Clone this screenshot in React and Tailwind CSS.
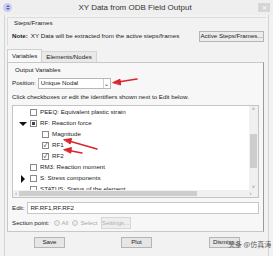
import React from 'react';

const font = { fontFamily: '"Liberation Sans", "Noto Sans CJK SC", sans-serif' };

/* ─── 작은 체크박스 ─── */
const Check = ({ state }) => (
  <span className="w-[7px] h-[7px] border border-[#8a8a8a] bg-white flex items-center justify-center shrink-0">
    {state === 'on' && <span className="text-[6px] leading-none text-[#222] -mt-px">✓</span>}
    {state === 'part' && <span className="w-[3px] h-[3px] bg-[#444]" />}
  </span>
);

/* ─── 트리 삼각형 (없으면 빈칸) ─── */
const Tri = ({ kind }) => (
  <span className="w-[8px] flex items-center justify-center shrink-0">
    {kind === 'open' && (
      <span className="w-0 h-0 border-l-[4px] border-r-[4px] border-t-[4px] border-l-transparent border-r-transparent border-t-[#111]" />
    )}
    {kind === 'closed' && (
      <span className="w-0 h-0 border-t-[4px] border-b-[4px] border-l-[4px] border-t-transparent border-b-transparent border-l-[#111]" />
    )}
  </span>
);

const ROWS = [
  { indent: 0, tri: null, check: 'off', label: 'PEEQ: Equivalent plastic strain' },
  { indent: 0, tri: 'open', check: 'part', label: 'RF: Reaction force' },
  { indent: 1, tri: null, check: 'off', label: 'Magnitude' },
  { indent: 1, tri: null, check: 'on', label: 'RF1' },
  { indent: 1, tri: null, check: 'on', label: 'RF2' },
  { indent: 0, tri: null, check: 'off', label: 'RM3: Reaction moment' },
  { indent: 0, tri: 'closed', check: 'off', label: 'S: Stress components' },
  { indent: 0, tri: null, check: 'off', label: 'STATUS: Status of the element' },
];

const Btn = ({ children, className = '' }) => (
  <div className={`h-[11px] border border-[#b5b5b5] bg-[#e6e6e6] flex items-center justify-center whitespace-nowrap text-[6.2px] text-[#222] ${className}`}>
    {children}
  </div>
);

export default function App() {
  return (
    <div style={font} className="relative w-[273px] h-[256px] overflow-hidden bg-[#f2f2f2] text-[#222] text-[6.2px] leading-none">
      {/* 타이틀 바 */}
      <div className="h-[15px] flex items-center px-[3px] bg-[#efefef]">
        <span className="w-[9px] h-[9px] rounded-full bg-[#c9cdf0] flex flex-col items-center justify-center">
          <span className="w-0 h-0 border-l-[2px] border-r-[2px] border-b-[2px] border-l-transparent border-r-transparent border-b-[#5560b8]" />
          <span className="w-0 h-0 mt-px border-l-[2px] border-r-[2px] border-t-[2px] border-l-transparent border-r-transparent border-t-[#5560b8]" />
        </span>
        <div className="flex-1 text-center text-[8px] text-[#333]">XY Data from ODB Field Output</div>
        <span className="w-[12px] h-[9px] bg-[#d6d6d6] text-white text-[6px] flex items-center justify-center">✕</span>
      </div>

      {/* 본문 */}
      <div className="h-[241px] mx-[4px] border-x border-[#d4d4d4] flex flex-col px-[2px]">
        {/* Steps/Frames 그룹 */}
        <div className="mt-[2px] h-[29px] border-t border-l border-[#dcdcdc] flex flex-col">
          <div className="h-[10px] flex items-center pl-[6px]">Steps/Frames</div>
          <div className="h-[13px] mt-[2px] flex items-center pl-[4px] pr-[2px]">
            <span className="font-bold">Note:</span>
            <span className="ml-[3px] flex-1 whitespace-nowrap">XY Data will be extracted from the active steps/frames</span>
            <Btn className="w-[65px] bg-[#ececec]">Active Steps/Frames...</Btn>
          </div>
        </div>

        {/* 탭 */}
        <div className="mt-[3px] h-[13px] flex items-end">
          <div className="h-[13px] px-[4px] border border-b-0 border-[#cfcfcf] bg-[#f7f7f7] flex items-center">Variables</div>
          <div className="h-[11px] px-[4px] border-t border-r border-[#d6d6d6] bg-[#e9e9e9] flex items-center">Elements/Nodes</div>
        </div>

        {/* 탭 패널 */}
        <div className="h-[170px] border border-[#c8c8c8] border-r-[#9a9a9a] bg-[#f7f7f7] flex flex-col px-[4px] mr-[2px]">
          <div className="h-[11px] mt-[2px] flex items-center pl-[3px]">Output Variables</div>
          <div className="h-[11px] mt-[2px] flex items-center">
            <span>Position:</span>
            <div className="ml-[2px] w-[73px] h-[11px] border border-[#b8b8b8] bg-white flex items-center">
              <span className="flex-1 pl-[2px]">Unique Nodal</span>
              <span className="w-[7px] h-full border-l border-[#d0d0d0] flex items-center justify-center text-[6px]">⌄</span>
            </div>
          </div>
          <div className="h-[11px] mt-[3px] flex items-center whitespace-nowrap">Click checkboxes or edit the identifiers shown next to Edit below.</div>

          {/* 리스트 */}
          <div className="mt-[2px] h-[93px] border border-[#c4c4c4] bg-white flex flex-col">
            <div className="flex-1 flex min-h-0">
              <div className="flex-1 overflow-hidden pt-[1px] pl-[6px]">
                {ROWS.map((r, i) => (
                  <div key={i} className="h-[11px] flex items-center gap-[3px]" style={{ paddingLeft: r.indent * 12 }}>
                    <Tri kind={r.tri} />
                    <Check state={r.check} />
                    <span className="whitespace-nowrap">{r.label}</span>
                  </div>
                ))}
              </div>
              {/* 세로 스크롤바 */}
              <div className="w-[9px] bg-[#f0f0f0] flex flex-col items-center">
                <span className="h-[8px] text-[5px] text-[#777] flex items-center">˄</span>
                <div className="flex-1 w-full pt-[22px] pb-[16px]">
                  <div className="h-[34px] w-[7px] mx-auto bg-[#cdcdcd]" />
                </div>
                <span className="h-[8px] text-[5px] text-[#777] flex items-center">˅</span>
              </div>
            </div>
            {/* 가로 스크롤바 */}
            <div className="h-[7px] bg-[#f0f0f0] flex items-center">
              <span className="w-[6px] text-[5px] text-[#777] text-center">‹</span>
              <div className="w-[178px] h-[5px] bg-[#cdcdcd]" />
              <div className="flex-1" />
              <span className="w-[15px] text-[5px] text-[#777] text-center">›</span>
            </div>
          </div>

          <div className="h-[12px] mt-[4px] flex items-center">
            <span>Edit:</span>
            <div className="ml-[3px] flex-1 h-[12px] border border-[#c8c8c8] bg-white flex items-center pl-[2px]">RF.RF1,RF.RF2</div>
          </div>

          <div className="h-[12px] mt-[3px] flex items-center text-[#aaa]">
            <span className="text-[#222]">Section point:</span>
            <span className="ml-[4px] w-[6px] h-[6px] rounded-full border border-[#c6c6c6] bg-[#ececec]" />
            <span className="ml-[2px]">All</span>
            <span className="ml-[4px] w-[6px] h-[6px] rounded-full border border-[#c6c6c6] bg-[#ececec]" />
            <span className="ml-[2px]">Select</span>
            <div className="ml-[3px] w-[30px] h-[12px] border border-[#d6d6d6] bg-[#eeeeee] flex items-center justify-center text-[#b0b0b0]">Settings...</div>
          </div>
        </div>

        {/* 하단 버튼 */}
        <div className="mt-[5px] h-[11px] flex items-center">
          <Btn className="ml-[27px] w-[31px]">Save</Btn>
          <Btn className="ml-[56px] w-[31px]">Plot</Btn>
          <Btn className="ml-[57px] w-[31px] justify-start pl-[3px]">Dismiss</Btn>
        </div>
      </div>

      {/* 워터마크 */}
      <span className="absolute left-[228px] top-[241px] text-[7px] text-[#555] whitespace-nowrap" style={{ fontFamily: '"Noto Sans CJK SC", sans-serif' }}>
        头条 @仿真涛
      </span>

      {/* 빨간 화살표 */}
      <svg className="absolute inset-0 pointer-events-none" width="273" height="256" viewBox="0 0 273 256">
        <g fill="#d9252b" stroke="#d9252b" strokeLinecap="round">
          <path d="M137 79 L118 82" strokeWidth="1.6" />
          <path d="M113 82.5 L120 79.2 L120.6 84.6 Z" />
          <path d="M97 149 L69 141" strokeWidth="1.4" />
          <path d="M64 139.6 L71.6 138.6 L70.2 143.6 Z" />
          <path d="M82 153 L69 150.5" strokeWidth="1.4" />
          <path d="M64 149.6 L71.4 147.6 L70.8 152.8 Z" />
        </g>
      </svg>
    </div>
  );
}
